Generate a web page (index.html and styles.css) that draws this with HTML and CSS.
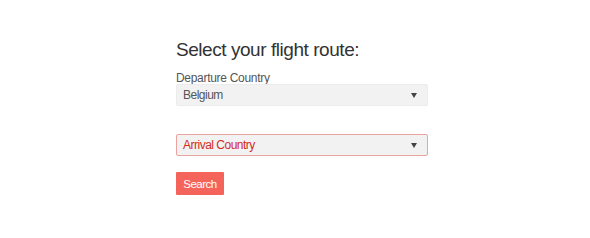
FILE: index.html
```html
<!DOCTYPE html>
<html>
<head>
<meta charset="utf-8">
<link rel="stylesheet" href="styles.css">
</head>
<body>
<form class="route">
  <h1 class="title">Select your flight route:</h1>
  <label class="label">Departure Country</label>
  <div class="select">
    <span class="value">Belgium</span>
    <span class="caret"></span>
  </div>
  <div class="select select-error">
    <span class="value">Arrival Country</span>
    <span class="caret"></span>
  </div>
  <button type="button" class="btn">Search</button>
</form>
</body>
</html>
```
FILE: styles.css
```css
html, body {
  margin: 0;
  padding: 0;
  background: #fff;
}
body {
  font-family: "Liberation Sans", Arial, sans-serif;
  color: #333;
}
.route {
  width: 252px;
  margin-left: 176px;
  padding-top: 38px;
  display: flex;
  flex-direction: column;
  align-items: flex-start;
}
.title {
  font-size: 19px;
  letter-spacing: -0.45px;
  font-weight: normal;
  margin: 0;
  line-height: 24px;
  color: #333;
}
.label {
  margin-top: 10px;
  font-size: 12px;
  letter-spacing: -0.3px;
  line-height: 12px;
  color: #555;
}
.select {
  box-sizing: border-box;
  width: 252px;
  height: 22px;
  background: #f2f2f2;
  border: 1px solid #ececec;
  border-radius: 2px;
  display: flex;
  align-items: center;
  justify-content: space-between;
  padding: 0 10px 0 6px;
  font-size: 12px;
  letter-spacing: -0.5px;
  color: #555;
}
.select-error {
  margin-top: 28px;
  border-color: #eba3a0;
  color: #d42a1e;
}
.caret {
  width: 0;
  height: 0;
  border-left: 3px solid transparent;
  border-right: 3px solid transparent;
  border-top: 5px solid #444;
}
.btn {
  margin-top: 16px;
  width: 48px;
  height: 23px;
  border: none;
  border-radius: 1px;
  background: #f4645a;
  color: #fff;
  font-family: "Liberation Sans", Arial, sans-serif;
  font-size: 11.5px;
  letter-spacing: -0.5px;
  padding: 0;
}
```
